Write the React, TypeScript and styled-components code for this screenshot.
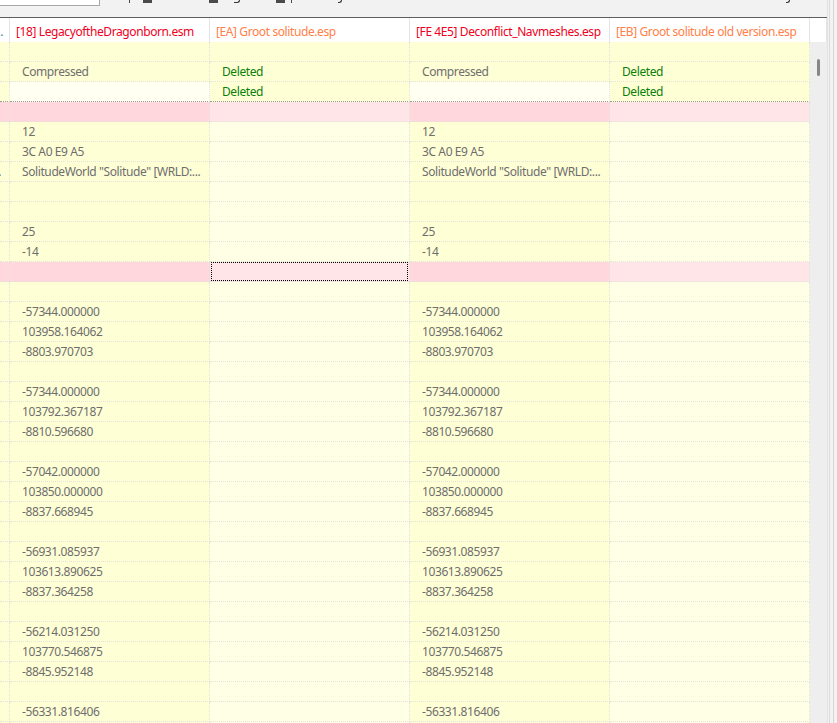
import React from 'react';
import styled, { createGlobalStyle, css } from 'styled-components';

const GlobalStyle = createGlobalStyle`
    html, body {
        margin: 0;
        padding: 0;
        overflow: hidden;
        background: #f0f0f0;
    }
    body {
        font-family: "Noto Sans", "Open Sans", Arial, sans-serif;
        font-size: 12px;
        letter-spacing: -0.4px;
    }
`;

type Tone = 'dark' | 'light' | 'pale' | 'pinkDark' | 'pinkLight';

const toneColors: Record<Tone, string> = {
    dark: '#ffffd6',
    light: '#ffffe6',
    pale: '#fffff2',
    pinkDark: '#ffd7dc',
    pinkLight: '#ffe5e8',
};

const Window = styled.div`
    width: 837px;
    height: 723px;
    display: flex;
    flex-direction: row;
    overflow: hidden;
    background: #f0f0f0;
`;

const MainPane = styled.div`
    width: 827px;
    display: flex;
    flex-direction: column;
`;

const Toolbar = styled.div`
    height: 17px;
    display: flex;
    align-items: flex-start;
    background: #f2f2f2;
    border-bottom: 1px solid #5f5f5f;
    flex-shrink: 0;
`;

const SearchBox = styled.div`
    width: 99px;
    height: 5px;
    background: #ffffff;
    border-right: 1px solid #a8a8a8;
    border-bottom: 1px solid #a8a8a8;
    flex-shrink: 0;
`;

// bottoms of the toolbar captions and check boxes that scroll out of view
const Stub = styled.span<{ $at: number; $w: number; $hook?: boolean }>`
    position: relative;
    left: ${(p) => p.$at}px;
    width: ${(p) => p.$w}px;
    height: 3px;
    margin-right: -${(p) => p.$w}px;
    flex-shrink: 0;
    ${(p) =>
        p.$hook
            ? css`
                  border-right: 1px solid #333;
                  border-bottom: 1px solid #333;
                  border-bottom-right-radius: 3px;
                  box-sizing: border-box;
              `
            : css`
                  background: #4a4a4a;
              `}
`;

const Header = styled.div`
    height: 24px;
    display: flex;
    background: #ffffff;
    flex-shrink: 0;
`;

const HeaderCell = styled.div<{ $w: number; $color: string }>`
    width: ${(p) => p.$w}px;
    height: 24px;
    flex-shrink: 0;
    box-sizing: border-box;
    border-right: 1px solid #e5e5e5;
    padding: 4px 0 0 6px;
    color: ${(p) => p.$color};
    line-height: 19px;
    white-space: nowrap;
    overflow: hidden;
`;

const HeaderStub = styled(HeaderCell)`
    padding-left: 0;
    span {
        margin-left: -6px;
    }
`;

const Body = styled.div`
    flex: 1;
    display: flex;
    min-height: 0;
`;

const Table = styled.div`
    width: 810px;
    display: flex;
    flex-direction: column;
    flex-shrink: 0;
`;

const Row = styled.div`
    display: flex;
    height: 20px;
    flex-shrink: 0;
`;

const Cell = styled.div<{ $w: number; $tone: Tone; $strong?: boolean; $green?: boolean }>`
    width: ${(p) => p.$w}px;
    flex-shrink: 0;
    box-sizing: border-box;
    position: relative;
    background: ${(p) => toneColors[p.$tone]};
    border-right: 1px dotted #e2e2dc;
    border-bottom: 1px dotted ${(p) => (p.$strong ? '#9a9a9a' : '#e2e2dc')};
    padding-left: 12px;
    line-height: 19px;
    color: ${(p) => (p.$green ? '#0a800a' : '#6e6e6e')};
    white-space: nowrap;
    overflow: hidden;
`;

const EdgeCell = styled(Cell)`
    padding-left: 0;
    span {
        margin-left: -8px;
    }
`;

const FocusRect = styled.div`
    position: absolute;
    left: 1px;
    top: 0;
    right: 1px;
    bottom: 0;
    border: 1px dotted #000;
`;

const ScrollTrack = styled.div`
    width: 17px;
    background: #eeeeee;
    display: flex;
    justify-content: center;
    padding-top: 17px;
    box-sizing: border-box;
`;

const ScrollThumb = styled.div`
    width: 3px;
    height: 17px;
    border-radius: 2px;
    background: #878787;
`;

const SideEdge = styled.div`
    width: 10px;
    flex-shrink: 0;
    display: flex;
    background: #f3f3f3;
    border-left: 1px solid #e2e2e2;
    box-sizing: border-box;
`;

const EdgeLine = styled.div<{ $gap: number; $color: string }>`
    margin-left: ${(p) => p.$gap}px;
    width: 1px;
    background: ${(p) => p.$color};
`;

const widths = [10, 200, 200, 200, 200];

const headers = [
    { label: '\u2026', color: '#2b8c9c' },
    { label: '[18] LegacyoftheDragonborn.esm', color: '#f0001c' },
    { label: '[EA] Groot solitude.esp', color: '#ff8048' },
    { label: '[FE 4E5] Deconflict_Navmeshes.esp', color: '#f0001c' },
    { label: '[EB] Groot solitude old version.esp', color: '#ff8048' },
];

type RowKind = 'top' | 'pale' | 'pink' | 'plain';

interface GridRow {
    kind: RowKind;
    values: string[];
    edge?: string;
    focus?: boolean;
}

const plain = (a = '', b = ''): GridRow => ({ kind: 'plain', values: [a, '', b, ''] });

const coords = [
    ['-57344.000000', '103958.164062', '-8803.970703'],
    ['-57344.000000', '103792.367187', '-8810.596680'],
    ['-57042.000000', '103850.000000', '-8837.668945'],
    ['-56931.085937', '103613.890625', '-8837.364258'],
    ['-56214.031250', '103770.546875', '-8845.952148'],
    ['-56331.816406', '103741.000000', '-8840.120117'],
];

const rows: GridRow[] = [
    { kind: 'top', values: ['', '', '', ''] },
    { kind: 'top', values: ['Compressed', 'Deleted', 'Compressed', 'Deleted'] },
    { kind: 'pale', values: ['', 'Deleted', '', 'Deleted'] },
    { kind: 'pink', values: ['', '', '', ''] },
    plain('12', '12'),
    plain('3C A0 E9 A5', '3C A0 E9 A5'),
    { ...plain('SolitudeWorld "Solitude" [WRLD:...', 'SolitudeWorld "Solitude" [WRLD:...'), edge: '\u2026' },
    plain(),
    plain(),
    plain('25', '25'),
    plain('-14', '-14'),
    { kind: 'pink', values: ['', '', '', ''], focus: true },
    plain(),
    ...coords.flatMap((c) => [plain(c[0], c[0]), plain(c[1], c[1]), plain(c[2], c[2]), plain()]),
];

const toneFor = (kind: RowKind, col: number): Tone => {
    const master = col === 0 || col === 1 || col === 3;
    if (kind === 'pink') return master ? 'pinkDark' : 'pinkLight';
    if (kind === 'top') return 'dark';
    if (kind === 'pale') return col === 1 || col === 3 ? 'pale' : 'dark';
    return master ? 'dark' : 'light';
};

const toolbarStubs = [
    { at: 29, w: 1 },
    { at: 43, w: 9 },
    { at: 109, w: 9 },
    { at: 134, w: 6, hook: true },
    { at: 176, w: 9 },
    { at: 191, w: 1 },
    { at: 238, w: 4, hook: true },
    { at: 686, w: 4, hook: true },
];

const App: React.FC = () => {
    return (
        <>
            <GlobalStyle />
            <Window>
                <MainPane>
                    <Toolbar>
                        <SearchBox />
                        {toolbarStubs.map((s, i) => (
                            <Stub key={i} $at={s.at} $w={s.w} $hook={s.hook} />
                        ))}
                    </Toolbar>
                    <Header>
                        {headers.map((h, i) =>
                            i === 0 ? (
                                <HeaderStub key={i} $w={widths[i]} $color={h.color}>
                                    <span>{h.label}</span>
                                </HeaderStub>
                            ) : (
                                <HeaderCell key={i} $w={widths[i]} $color={h.color}>
                                    {h.label}
                                </HeaderCell>
                            )
                        )}
                        <HeaderCell $w={17} $color="#000" />
                    </Header>
                    <Body>
                        <Table>
                            {rows.map((row, r) => (
                                <Row key={r}>
                                    <EdgeCell $w={widths[0]} $tone={toneFor(row.kind, 0)} $strong={row.kind === 'pale'}>
                                        <span>{row.edge ?? ''}</span>
                                    </EdgeCell>
                                    {row.values.map((v, c) => (
                                        <Cell
                                            key={c}
                                            $w={widths[c + 1]}
                                            $tone={toneFor(row.kind, c + 1)}
                                            $strong={row.kind === 'pale'}
                                            $green={v === 'Deleted'}
                                        >
                                            {v}
                                            {row.focus && c === 1 && <FocusRect />}
                                        </Cell>
                                    ))}
                                </Row>
                            ))}
                        </Table>
                        <ScrollTrack>
                            <ScrollThumb />
                        </ScrollTrack>
                    </Body>
                </MainPane>
                <SideEdge>
                    <EdgeLine $gap={1} $color="#dadada" />
                    <EdgeLine $gap={3} $color="#d6d6d6" />
                </SideEdge>
            </Window>
        </>
    );
};

export default App;
